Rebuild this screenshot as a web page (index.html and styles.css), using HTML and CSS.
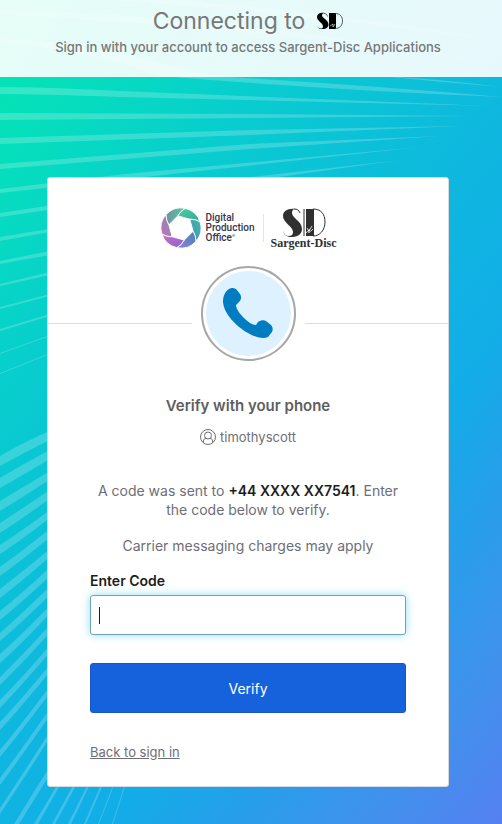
FILE: index.html
```
<!DOCTYPE html>
<html lang="en">
<head>
    <meta charset="UTF-8">
    <meta name="viewport" content="width=device-width, initial-scale=1.0">
    <title>Sargent-Disc - Sign In</title>
    <link rel="stylesheet" href="styles.css">
</head>
<body>
    <!-- Background rays -->
    <svg class="rays" viewBox="0 0 502 824" preserveAspectRatio="none" aria-hidden="true">
        <g fill="#fff" fill-opacity="0.2">
            <path d="M110 -4 Q300 6 502 41 Q300 12 80 -2z"/>
            <path d="M0 9 Q250 18 502 64 Q250 26 0 15z"/>
            <path d="M380 76 Q440 79 502 87 Q440 82 380 76z"/>
            <path d="M0 38 Q90 42 210 76 L160 76 Q80 48 0 43z"/>
            <path d="M160 76 L210 76 Q350 84 502 97 Q330 90 160 76z"/>
            <path d="M0 87 Q40 87 120 91 L490 106 L120 97 Q40 94 0 94z"/>
            <path d="M0 113 L250 114 L475 116 L250 118 L0 120z"/>
            <path d="M0 138 L250 130 L462 126 L250 135 L0 144z"/>
            <path d="M0 164 L250 144 L440 136 L250 149 L0 169z"/>
            <path d="M0 189 L125 174 L420 147 L200 171 L0 193z"/>
            <path d="M0 213 L200 183 L400 160 L200 188 L0 217z"/>
            <path d="M0 237 Q60 228 300 185 L50 232 L0 241z"/>
            <path d="M0 261 L50 251 L240 211 L50 255 L0 264z"/>
            <path d="M0 284 L50 272 L240 225 L50 275 L0 286z"/>
            <path d="M0 307 L50 294 L240 240 L50 296 L0 309z"/>
            <path d="M0 329 L50 314 L200 266 L50 316 L0 331z"/>
            <path d="M0 353 L50 335 L120 310 L50 336 L0 354z"/>
            <path d="M0 373 L50 353 L50 354 L0 374z"/>
            <path d="M0 456 Q25 441 70 422 L70 430 Q25 452 0 466z"/>
            <path d="M0 478 Q25 463 70 439 L70 447 Q25 474 0 488z"/>
            <path d="M0 501 Q25 486 70 459 L70 466 Q25 496 0 511z"/>
            <path d="M0 523 Q25 507 70 476 L70 484 Q25 517 0 533z"/>
            <path d="M0 545 Q25 529 70 495 L70 502 Q25 538 0 554z"/>
            <path d="M0 567 Q25 549 70 513 L70 521 Q25 558 0 576z"/>
            <path d="M0 589 Q25 570 70 532 L70 539 Q25 579 0 598z"/>
            <path d="M0 611 Q25 591 70 549 L70 557 Q25 600 0 620z"/>
            <path d="M0 633 Q25 611 70 567 L70 575 Q25 620 0 641z"/>
            <path d="M0 654 Q25 632 70 585 L70 592 Q25 641 0 663z"/>
            <path d="M0 677 Q25 653 70 603 L70 610 Q25 661 0 685z"/>
            <path d="M0 700 Q25 675 70 622 L70 629 Q25 682 0 708z"/>
            <path d="M0 722 Q25 696 70 640 L70 647 Q25 703 0 730z"/>
            <path d="M0 750 Q25 720 70 660 L70 666 Q25 727 0 757z"/>
            <path d="M0 778 Q25 745 70 680 L70 686 Q25 752 0 785z"/>
            <path d="M0 808 Q25 771 70 700 L70 706 Q25 777 0 814z"/>
            <path d="M14 824 L70 734 L70 742 L19 824z"/>
            <path d="M34 824 L60 780 L63 780 L38 824z"/>
            <path d="M52 824 L76 780 L79 780 L55 824z"/>
            <path d="M68 824 L90 780 L92 780 L71 824z"/>
            <path d="M84 824 L103 780 L105 780 L86 824z"/>
            <path d="M98 824 L115 780 L116 780 L99 824z"/>
            <path d="M112 824 L126 780 L127 780 L113 824z"/>
        </g>
    </svg>

    <!-- Header -->
    <header class="banner">
        <h1 class="banner-title">
            Connecting to
            <svg class="app-logo" viewBox="0 0 27 18" role="img" aria-label="SD">
                <path d="M8.500 1C4 0 1 2 1 5c0 4 6 6 6 9.500 0 1.500-1 2-2 2-2 0-3-1-4-3 1 3 3 3.500 5.500 3.500 4 0 6-2 6-4.500C12.500 8 6 6 6 3.500 6 2 7 1 8.500 1z"/>
                <path d="M13 1h7v16h-7z"/>
                <path d="M19 1.500c5 0 7.500 3 7.500 7.500s-3 7.500-7.500 7.500M8 1.500c2 0 3 1 3.500 3" fill="none" stroke="#333" stroke-width=".8"/>
                <path d="M14 14l3-2v3l2-3" fill="none" stroke="#ddd" stroke-width=".7"/>
            </svg>
        </h1>
        <p class="banner-text">Sign in with your account to access Sargent-Disc Applications</p>
    </header>

    <!-- Verification form -->
    <main class="content">
        <div class="card">
            <div class="logos">
                <svg class="aperture" viewBox="0 0 42 42" aria-hidden="true">
                    <defs>
                        <linearGradient id="g1" x1="0" y1="1" x2="1" y2="0"><stop offset="0" stop-color="#c46cc0"/><stop offset="1" stop-color="#7f93a8"/></linearGradient>
                        <linearGradient id="g2" x1="0" y1="0" x2="1" y2="0"><stop offset="0" stop-color="#7390a0"/><stop offset="1" stop-color="#4fd0a4"/></linearGradient>
                        <linearGradient id="g3" x1="0" y1="0" x2="1" y2="1"><stop offset="0" stop-color="#48d6a0"/><stop offset="1" stop-color="#3a9f98"/></linearGradient>
                        <linearGradient id="g4" x1="1" y1="0" x2="0" y2="1"><stop offset="0" stop-color="#3fb9a5"/><stop offset="1" stop-color="#4c8cb8"/></linearGradient>
                        <linearGradient id="g5" x1="1" y1="0" x2="0" y2="1"><stop offset="0" stop-color="#4682b0"/><stop offset="1" stop-color="#8e80e4"/></linearGradient>
                        <linearGradient id="g6" x1="0" y1="0" x2="1" y2="1"><stop offset="0" stop-color="#d66dbd"/><stop offset="1" stop-color="#8064d4"/></linearGradient>
                    </defs>
                    <g stroke="#fff" stroke-width=".9" stroke-linejoin="round">
                        <path fill="url(#g1)" d="M2 27.200A20 20 0 0 1 6.100 7.600Q6 13 8.900 17.800L12.200 29.800Q6.600 30 2 27.200z"/>
                        <path fill="url(#g2)" d="M6.100 7.600A20 20 0 0 1 25.200 1.400Q20.300 4.200 17.800 8.900L8.900 17.800Q6 13 6.100 7.600z"/>
                        <path fill="url(#g3)" d="M25.200 1.400A20 20 0 0 1 40 14.800Q35.500 12 29.800 12.200L17.800 8.900Q20.300 4.200 25.200 1.400z"/>
                        <path fill="url(#g4)" d="M40 14.800A20 20 0 0 1 35.900 34.400Q36 29 33.100 24.200L29.800 12.200Q35.500 12 40 14.800z"/>
                        <path fill="url(#g5)" d="M35.900 34.400A20 20 0 0 1 16.800 40.600Q21.700 37.900 24.200 33.100L33.100 24.200Q36 29 35.900 34.400z"/>
                        <path fill="url(#g6)" d="M16.800 40.600A20 20 0 0 1 2 27.200Q6.600 30 12.200 29.800L24.200 33.100Q21.700 37.900 16.800 40.600z"/>
                    </g>
                </svg>
                <div class="dpo-name">Digital<br>Production<br>Office<sup>®</sup></div>
                <div class="divider"></div>
                <div class="sd-logo">
                    <svg class="sd-mark" viewBox="0 0 44 29" aria-hidden="true">
                        <path fill="#303030" d="M13 1C6 0 1 3 1 8c0 7 10 10 10 16 0 3-2 4-4 4-3 0-5-2-6-5 1 4 4 6 9 6 7 0 10-4 10-8C20 13 10 10 10 5c0-2 1-4 3-4z"/>
                        <path fill="none" stroke="#303030" d="M12 1c3 0 5 1 6 4M22 1v27M31 1c8 0 12 5 12 13s-5 14-12 14"/>
                        <path fill="#303030" d="M24 1h8v27h-8z"/>
                        <path fill="none" stroke="#fff" stroke-width=".8" d="M24 25q5-6 3-2t4-2M25 20l2 3 3-5"/>
                    </svg>
                    <span class="sd-name">Sargent-Disc</span>
                </div>
            </div>

            <div class="factor">
                <div class="factor-badge">
                    <svg class="phone" viewBox="0 0 50 51" aria-hidden="true">
                        <path fill="#007dc1" d="M7 .5C9-.5 12 0 13.500 1.500L17 6c2 3 1 6-1 8l-3 3c0 4 4 9 8 13 4 4 8 7 12 7l2-3c3-2 6-2 8-1l5 4c2 2 2 5 1 7l-4 5c-4 2-12 1-20-4C13 38 1 26 0 14 0 8 2 3 7 .5z"/>
                    </svg>
                </div>
            </div>

            <h2 class="title">Verify with your phone</h2>
            <div class="user">
                <svg class="user-icon" viewBox="0 0 16 16" fill="none" stroke="#6e6e78" aria-hidden="true">
                    <circle cx="8" cy="8" r="7.500"/>
                    <circle cx="8" cy="6.500" r="3.500"/>
                    <path d="M3.500 13.500V12c0-1.500 1-2.500 2.500-2.500M12.500 13.500V12c0-1.500-1-2.500-2.500-2.500"/>
                </svg>
                <span>timothyscott</span>
            </div>

            <form class="verify-form">
                <p class="message">A code was sent to <strong>+44 XXXX XX7541</strong>. Enter the code below to verify.</p>
                <p class="message">Carrier messaging charges may apply</p>
                <label for="code">Enter Code</label>
                <input type="text" id="code" name="code" autocomplete="one-time-code" autofocus>
                <button type="submit">Verify</button>
                <a href="#" class="back">Back to sign in</a>
            </form>
        </div>
    </main>
</body>
</html>
```
FILE: styles.css
```
/* General Styles */
* {
    box-sizing: border-box;
}
body {
    position: relative;
    min-height: 100vh;
    margin: 0;
    background: linear-gradient(129deg, #04e5b2 3%, #06dbc0 15%, #08cdce 28%, #0eb8de 50%, #12ade8 66%, #279eea 77%, #3c94ec 86%, #5580f1 100%);
    color: #6e6e78;
    font-family: Inter, "Liberation Sans", sans-serif;
    font-size: 14px;
}
h1, h2, p {
    margin: 0;
}
.rays {
    position: absolute;
    z-index: -1;
    width: 100%;
    height: 100%;
}

/* Header */
.banner {
    height: 77px;
    padding: 4px 6px 0 0;
    background-color: rgba(255, 255, 255, 0.9);
    color: #777;
    text-align: center;
}
.banner-title {
    display: flex;
    justify-content: center;
    align-items: center;
    gap: 11px;
    font-size: 23px;
    font-weight: 400;
    line-height: 34px;
}
.app-logo {
    width: 27px;
    height: 18px;
}
.banner-text {
    font-size: 13px;
    font-weight: 500;
    line-height: 18px;
}

/* Card */
.content {
    padding: 100px 6px 37px 0;
}
.card {
    max-width: 402px;
    margin: 0 auto;
    background-color: #fff;
    border: 1px solid #d8d8d8;
    border-radius: 3px;
}
.logos {
    display: flex;
    justify-content: center;
    align-items: center;
    height: 88px;
    padding-top: 12px;
}
.aperture {
    width: 42px;
    height: 42px;
}
.dpo-name {
    padding: 0 8px 0 4px;
    color: #34344e;
    font-family: Roboto, sans-serif;
    font-size: 10px;
    font-weight: 500;
    line-height: 10px;
}
.dpo-name sup {
    font-size: 4px;
    line-height: 1px;
}
.divider {
    width: 1px;
    height: 28px;
    background-color: #e4e4e4;
}
.sd-logo {
    display: flex;
    flex-direction: column;
    align-items: center;
    padding-left: 7px;
}
.sd-mark {
    width: 44px;
    height: 29px;
}
.sd-name {
    color: #303030;
    font-family: "Liberation Serif", serif;
    font-size: 12px;
    font-weight: 700;
    line-height: 12px;
}

/* Phone badge with a line on both sides */
.factor {
    display: flex;
    align-items: center;
    gap: 9px;
}
.factor::before, .factor::after {
    content: "";
    flex: 1;
    height: 1px;
    margin-top: 20px;
    background-color: #ddd;
}
.factor-badge {
    display: flex;
    justify-content: center;
    align-items: center;
    width: 95px;
    height: 95px;
    background-color: #def1ff;
    border: 2px solid #a7a7a7;
    border-radius: 50%;
    box-shadow: inset 0 0 0 3px #fff;
}
.phone {
    width: 50px;
    height: 51px;
}
.title {
    margin-top: 35px;
    color: #5e5e5e;
    font-size: 15px;
    font-weight: 600;
    line-height: 20px;
    text-align: center;
}
.user {
    display: flex;
    justify-content: center;
    align-items: center;
    gap: 4px;
    margin-top: 11px;
    font-size: 13px;
    line-height: 20px;
}
.user-icon {
    width: 16px;
    height: 16px;
}

/* Form */
.verify-form {
    display: flex;
    flex-direction: column;
    padding: 34px 42px 24px;
}
.message {
    margin-bottom: 17px;
    line-height: 19px;
    text-align: center;
}
.message strong {
    color: #1d1d21;
    font-weight: 600;
}
label {
    color: #1d1d21;
    font-weight: 600;
    line-height: 18px;
}
input {
    height: 40px;
    margin: 5px 0 28px;
    padding: 0 8px;
    border: 1px solid #6fa3b8;
    border-radius: 3px;
    box-shadow: 0 0 8px #8fdcf5;
    outline: none;
    color: #1d1d21;
    font: inherit;
}
/* Caret bar of the empty field */
input:focus {
    background: linear-gradient(#1d1d21, #1d1d21) 8px center / 1px 17px no-repeat #fff;
    caret-color: transparent;
}
button {
    height: 50px;
    background-color: #1662dd;
    border: 1px solid #1558ce;
    border-radius: 3px;
    color: #fff;
    cursor: pointer;
    font: inherit;
}
button:hover {
    background-color: #1258c8;
}
.back {
    align-self: flex-start;
    margin-top: 29px;
    color: #6e6e78;
    font-size: 13px;
    line-height: 20px;
}
```
